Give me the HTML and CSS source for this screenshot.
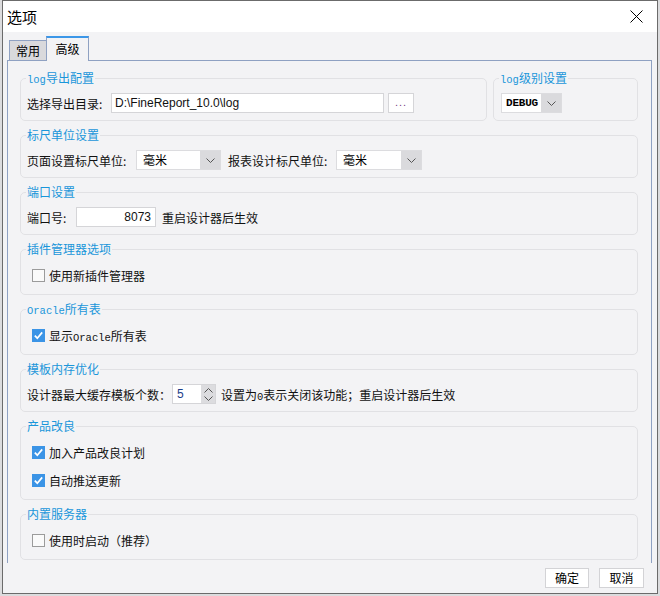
FILE: index.html
```html
<!DOCTYPE html>
<html lang="zh-CN">
<head>
<meta charset="utf-8">
<title>选项</title>
<link rel="stylesheet" href="styles.css">
</head>
<body>
<div class="window">
  <div class="titlebar">
    <span class="title">选项</span>
    <svg class="close" width="13" height="13" viewBox="0 0 13 13"><path d="M0.5 0.5 L12.5 12.5 M12.5 0.5 L0.5 12.5" stroke="#000" stroke-width="1" fill="none"/></svg>
  </div>
  <div class="body">
    <div class="tabs">
      <div class="tab tab-common">常用</div>
      <div class="tab tab-adv active">高级</div>
    </div>
    <div class="pane">
      <div class="top-row">
        <fieldset class="group group-export">
          <legend><span class="mono">log</span>导出配置</legend>
          <div class="row">
            <span class="lbl lbl-dir">选择导出目录:</span>
            <div class="field field-path">D:\FineReport_10.0\log</div>
            <div class="btn-dots">...</div>
          </div>
        </fieldset>
        <fieldset class="group group-level">
          <legend><span class="mono">log</span>级别设置</legend>
          <div class="row">
            <div class="combo combo-debug"><span class="combo-text mono">DEBUG</span><span class="combo-arrow"><svg width="9" height="5" viewBox="0 0 9 5"><path d="M0.5 0.5 L4.5 4.5 L8.5 0.5" stroke="#555" fill="none"/></svg></span></div>
          </div>
        </fieldset>
      </div>

      <fieldset class="group">
        <legend>标尺单位设置</legend>
        <div class="row">
          <span class="lbl lbl-page">页面设置标尺单位:</span>
          <div class="combo combo-unit1"><span class="combo-text">毫米</span><span class="combo-arrow"><svg width="9" height="5" viewBox="0 0 9 5"><path d="M0.5 0.5 L4.5 4.5 L8.5 0.5" stroke="#555" fill="none"/></svg></span></div>
          <span class="lbl lbl-report">报表设计标尺单位:</span>
          <div class="combo combo-unit2"><span class="combo-text">毫米</span><span class="combo-arrow"><svg width="9" height="5" viewBox="0 0 9 5"><path d="M0.5 0.5 L4.5 4.5 L8.5 0.5" stroke="#555" fill="none"/></svg></span></div>
        </div>
      </fieldset>

      <fieldset class="group">
        <legend>端口设置</legend>
        <div class="row">
          <span class="lbl lbl-port">端口号:</span>
          <div class="field field-port">8073</div>
          <span class="note note-port">重启设计器后生效</span>
        </div>
      </fieldset>

      <fieldset class="group">
        <legend>插件管理器选项</legend>
        <div class="row check-row">
          <span class="checkbox"></span>
          <span>使用新插件管理器</span>
        </div>
      </fieldset>

      <fieldset class="group">
        <legend><span class="mono">Oracle</span>所有表</legend>
        <div class="row check-row">
          <span class="checkbox checked"><svg width="13" height="13" viewBox="0 0 13 13"><path d="M2.8 6.6 L5.3 9.2 L10.2 3.4" stroke="#fff" stroke-width="1.7" fill="none"/></svg></span>
          <span>显示<span class="mono">Oracle</span>所有表</span>
        </div>
      </fieldset>

      <fieldset class="group">
        <legend>模板内存优化</legend>
        <div class="row">
          <span class="lbl lbl-cache">设计器最大缓存模板个数：</span>
          <div class="spinner">
            <span class="spin-text">5</span>
            <span class="spin-arrows">
              <svg width="9" height="5" viewBox="0 0 9 5"><path d="M0.5 4.5 L4.5 0.5 L8.5 4.5" stroke="#555" fill="none"/></svg>
              <svg width="9" height="5" viewBox="0 0 9 5"><path d="M0.5 0.5 L4.5 4.5 L8.5 0.5" stroke="#555" fill="none"/></svg>
            </span>
          </div>
          <span class="note note-cache">设置为<span class="mono">0</span>表示关闭该功能；重启设计器后生效</span>
        </div>
      </fieldset>

      <fieldset class="group">
        <legend>产品改良</legend>
        <div class="check-list">
          <div class="row check-row">
            <span class="checkbox checked"><svg width="13" height="13" viewBox="0 0 13 13"><path d="M2.8 6.6 L5.3 9.2 L10.2 3.4" stroke="#fff" stroke-width="1.7" fill="none"/></svg></span>
            <span>加入产品改良计划</span>
          </div>
          <div class="row check-row">
            <span class="checkbox checked"><svg width="13" height="13" viewBox="0 0 13 13"><path d="M2.8 6.6 L5.3 9.2 L10.2 3.4" stroke="#fff" stroke-width="1.7" fill="none"/></svg></span>
            <span>自动推送更新</span>
          </div>
        </div>
      </fieldset>

      <fieldset class="group last">
        <legend>内置服务器</legend>
        <div class="row check-row">
          <span class="checkbox"></span>
          <span>使用时启动（推荐）</span>
        </div>
      </fieldset>
    </div>
    <div class="buttons">
      <div class="button btn-ok">确定</div>
      <div class="button btn-cancel">取消</div>
    </div>
  </div>
</div>
</body>
</html>
```

FILE: styles.css
```css
html, body {
  margin: 0;
  padding: 0;
}
body {
  background: #dcdcde;
  font-family: "Noto Sans CJK SC", "Liberation Sans", sans-serif;
  font-size: 12px;
  color: #111;
  width: 660px;
  height: 596px;
  overflow: hidden;
}
.window {
  box-sizing: border-box;
  width: 656px;
  height: 594px;
  margin-left: 2px;
  border: 1px solid #6b6b6b;
  background: #f3f3f5;
  display: flex;
  flex-direction: column;
}
.titlebar {
  height: 31px;
  background: #fff;
  display: flex;
  align-items: center;
  justify-content: space-between;
  padding: 0 14px 0 4px;
}
.title {
  font-size: 15px;
  line-height: 31px;
  color: #000;
}
.close {
  display: block;
}
.body {
  flex: 1;
  display: flex;
  flex-direction: column;
  padding-top: 4px;
}
.tabs {
  display: flex;
  align-items: flex-end;
  height: 24px;
  padding-left: 6px;
}
.tab {
  box-sizing: border-box;
  height: 20px;
  border: 1px solid #8fa1c2;
  border-bottom: none;
  background: #d9d9dc;
  text-align: center;
  line-height: 19px;
  color: #000;
}
.tab-common {
  width: 38px;
}
.tab-adv {
  width: 43px;
  margin-left: -1px;
}
.tab.active {
  height: 25px;
  border-top: 2px solid #3c97e8;
  background: #f3f3f5;
  margin-bottom: -1px;
  position: relative;
  z-index: 1;
  line-height: 22px;
}
.pane {
  margin: 0 5px 0 4px;
  border: 1px solid #8fa1c2;
  border-bottom: none;
  padding: 9px 13px 3px 12px;
}
.top-row {
  display: flex;
  gap: 6px;
  margin-bottom: 6px;
}
.group {
  margin: 0 0 6px;
  border: 1px solid #e1e1e4;
  border-radius: 5px;
  padding: 7px 6px 7px;
  min-width: 0;
}
.top-row .group {
  margin-bottom: 0;
}
.group.last {
  margin-bottom: 0;
}
.group-export {
  flex: 1;
}
.group-level {
  width: 145px;
  box-sizing: border-box;
  flex: none;
}
legend {
  padding: 0 1px;
  margin-left: -1px;
  line-height: 16px;
  height: 16px;
  color: #1a96da;
  font-size: 12px;
}
.mono {
  font-family: "Liberation Mono", "DejaVu Sans Mono", monospace;
  font-size: 10.5px;
  line-height: 1;
}
.row {
  display: flex;
  align-items: center;
  height: 20px;
  white-space: nowrap;
}
.lbl {
  flex: none;
}
.lbl-dir { width: 84px; }
.lbl-page { width: 109px; }
.lbl-report { width: 108px; margin-left: 7px; }
.lbl-port { width: 49px; }
.lbl-cache { width: 145px; }
.field {
  box-sizing: border-box;
  height: 20px;
  background: #fff;
  border: 1px solid #d5d5d8;
  line-height: 18px;
  font-family: "Liberation Sans", sans-serif;
  font-size: 12px;
  color: #111;
}
.field-path {
  width: 273px;
  padding-left: 3px;
}
.btn-dots {
  box-sizing: border-box;
  width: 26px;
  height: 20px;
  margin-left: 4px;
  background: #fff;
  border: 1px solid #d5d5d8;
  text-align: center;
  line-height: 16px;
  color: #7a3f86;
  letter-spacing: 1px;
  font-family: "Liberation Sans", sans-serif;
  font-size: 11px;
}
.field-port {
  width: 80px;
  text-align: right;
  padding-right: 4px;
}
.note-port {
  margin-left: 6px;
}
.combo {
  box-sizing: border-box;
  height: 20px;
  display: flex;
  background: #fff;
  border: 1px solid #dcdcdf;
  flex: none;
}
.combo-text {
  flex: 1;
  padding-left: 6px;
  line-height: 18px;
  color: #000;
}
.combo-arrow {
  width: 20px;
  background: #dadadd;
  display: flex;
  align-items: center;
  justify-content: center;
}
.combo-arrow svg { display: block; }
.combo-debug {
  width: 61px;
  margin-left: 1px;
}
.combo-debug .combo-text {
  padding-left: 4px;
  font-size: 11px;
  line-height: 18px;
  letter-spacing: -0.2px;
  font-weight: bold;
  color: #000;
}
.combo-unit1 { width: 85px; }
.combo-unit2 { width: 86px; }
.spinner {
  box-sizing: border-box;
  width: 44px;
  height: 20px;
  display: flex;
  background: #fff;
  border: 1px solid #d5d5d8;
  flex: none;
}
.spin-text {
  flex: 1;
  padding-left: 4px;
  line-height: 18px;
  font-family: "Liberation Sans", sans-serif;
  font-size: 12px;
  color: #1c3e8a;
}
.spin-arrows {
  width: 14px;
  background: #dcdcdf;
  display: flex;
  flex-direction: column;
  align-items: center;
  justify-content: center;
  gap: 3px;
}
.spin-arrows svg { display: block; }
.note-cache {
  margin-left: 5px;
}
.check-row {
  height: 23px;
  padding-left: 5px;
  gap: 4px;
}
.check-list {
  display: flex;
  flex-direction: column;
  gap: 5px;
}
.checkbox {
  box-sizing: border-box;
  width: 13px;
  height: 13px;
  border: 1px solid #9b9b9b;
  background: #fafafa;
  flex: none;
}
.checkbox.checked {
  border: none;
  background: #3b94e6;
}
.checkbox svg { display: block; }
.buttons {
  display: flex;
  justify-content: flex-end;
  gap: 10px;
  margin-top: 5px;
  padding-right: 13px;
}
.button {
  box-sizing: border-box;
  height: 20px;
  background: #fff;
  border: 1px solid #d3d3d6;
  text-align: center;
  line-height: 18px;
  color: #000;
}
.btn-ok { width: 44px; }
.btn-cancel { width: 45px; }
```
